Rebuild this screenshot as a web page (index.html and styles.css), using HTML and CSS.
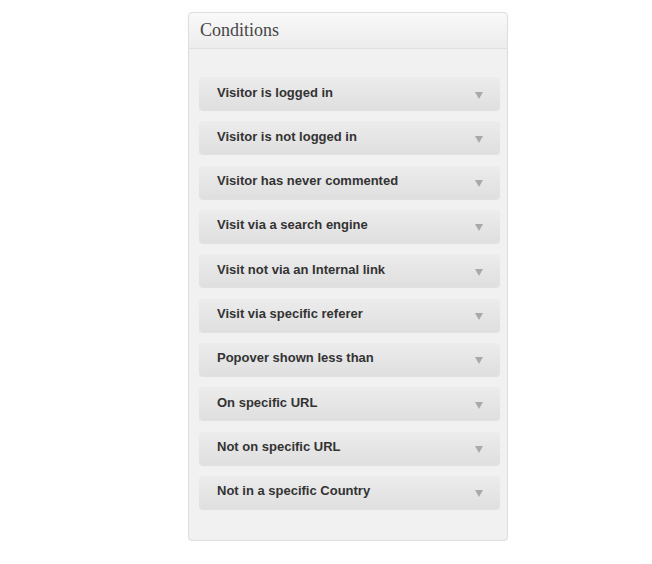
FILE: index.html
```html
<!DOCTYPE html>
<html>
<head>
<meta charset="utf-8">
<link rel="stylesheet" href="styles.css">
</head>
<body>
<div class="panel">
  <div class="panel-head">Conditions</div>
  <div class="panel-body">
    <div class="cond"><span>Visitor is logged in</span><i class="arrow"></i></div>
    <div class="cond"><span>Visitor is not logged in</span><i class="arrow"></i></div>
    <div class="cond"><span>Visitor has never commented</span><i class="arrow"></i></div>
    <div class="cond"><span>Visit via a search engine</span><i class="arrow"></i></div>
    <div class="cond"><span>Visit not via an Internal link</span><i class="arrow"></i></div>
    <div class="cond"><span>Visit via specific referer</span><i class="arrow"></i></div>
    <div class="cond"><span>Popover shown less than</span><i class="arrow"></i></div>
    <div class="cond"><span>On specific URL</span><i class="arrow"></i></div>
    <div class="cond"><span>Not on specific URL</span><i class="arrow"></i></div>
    <div class="cond"><span>Not in a specific Country</span><i class="arrow"></i></div>
  </div>
</div>
</body>
</html>
```
FILE: styles.css
```css
html, body { margin: 0; padding: 0; background: #ffffff; }
body { font-family: "Liberation Sans", Arial, sans-serif; }

.panel {
  margin: 12px 0 0 188px;
  width: 318px;
  border: 1px solid #dedede;
  border-radius: 4px;
  background: #f1f1f1;
  box-shadow: 0 1px 1px rgba(0,0,0,0.04);
}

.panel-head {
  height: 35px;
  border-bottom: 1px solid #e0e0e0;
  border-radius: 4px 4px 0 0;
  background: linear-gradient(#f9f9f9, #ececec);
  font-family: "Liberation Serif", Georgia, serif;
  font-size: 18px;
  color: #464646;
  padding-left: 11px;
  line-height: 35px;
}

.panel-body {
  padding: 28px 7px 31px 10px;
  display: flex;
  flex-direction: column;
  gap: 11.33px;
}

.cond {
  height: 33px;
  box-sizing: border-box;
  border-radius: 4px;
  background: linear-gradient(#ececec, #dfdfdf);
  box-shadow: 0 1px 1px rgba(0,0,0,0.07);
  display: flex;
  align-items: center;
  justify-content: space-between;
  padding: 0 17px 3px 18px;
  font-size: 13px;
  font-weight: bold;
  color: #333333;
}

.arrow {
  width: 0;
  height: 0;
  border-left: 4px solid transparent;
  border-right: 4px solid transparent;
  border-top: 7px solid #a9a9a9;
  margin-top: 6px;
}
```
